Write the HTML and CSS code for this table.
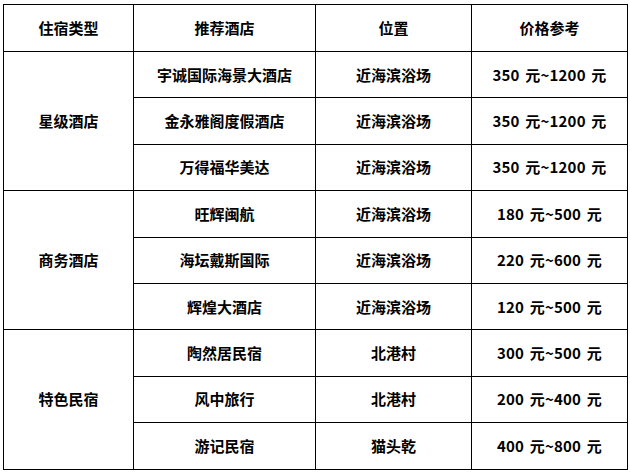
FILE: index.html
```html
<!DOCTYPE html>
<html lang="zh-CN">
<head>
<meta charset="utf-8">
<link rel="stylesheet" href="styles.css">
</head>
<body>
<table class="tbl">
  <colgroup>
    <col class="c1"><col class="c2"><col class="c3"><col class="c4">
  </colgroup>
  <thead>
    <tr class="head"><th>住宿类型</th><th>推荐酒店</th><th>位置</th><th>价格参考</th></tr>
  </thead>
  <tbody>
    <tr><td rowspan="3">星级酒店</td><td>宇诚国际海景大酒店</td><td>近海滨浴场</td><td class="price">350 元~1200 元</td></tr>
    <tr><td>金永雅阁度假酒店</td><td>近海滨浴场</td><td class="price">350 元~1200 元</td></tr>
    <tr><td>万得福华美达</td><td>近海滨浴场</td><td class="price">350 元~1200 元</td></tr>
    <tr><td rowspan="3">商务酒店</td><td>旺辉闽航</td><td>近海滨浴场</td><td class="price">180 元~500 元</td></tr>
    <tr><td>海坛戴斯国际</td><td>近海滨浴场</td><td class="price">220 元~600 元</td></tr>
    <tr><td>辉煌大酒店</td><td>近海滨浴场</td><td class="price">120 元~500 元</td></tr>
    <tr><td rowspan="3">特色民宿</td><td>陶然居民宿</td><td>北港村</td><td class="price">300 元~500 元</td></tr>
    <tr><td>风中旅行</td><td>北港村</td><td class="price">200 元~400 元</td></tr>
    <tr><td>游记民宿</td><td>猫头乾</td><td class="price">400 元~800 元</td></tr>
  </tbody>
</table>
</body>
</html>
```
FILE: styles.css
```css
html, body {
  margin: 0;
  padding: 0;
  background: #fff;
}
body {
  padding: 4px 0 0 3px;
  font-family: "Noto Sans CJK SC", "Noto Sans", sans-serif;
  color: #000;
}
.tbl {
  border-collapse: collapse;
  width: 624px;
  table-layout: fixed;
}
.c1 { width: 130px; }
.c2 { width: 182px; }
.c3 { width: 156px; }
.c4 { width: 156px; }
.tbl th, .tbl td {
  border: 1px solid #000;
  padding: 0;
  text-align: center;
  vertical-align: middle;
  font-size: 15px;
  font-weight: 700;
  line-height: 20px;
}
.tbl .price {
  word-spacing: 2px;
  letter-spacing: 0.2px;
}
.head { height: 47px; }
.tbl tbody tr { height: 46.4px; }
```
